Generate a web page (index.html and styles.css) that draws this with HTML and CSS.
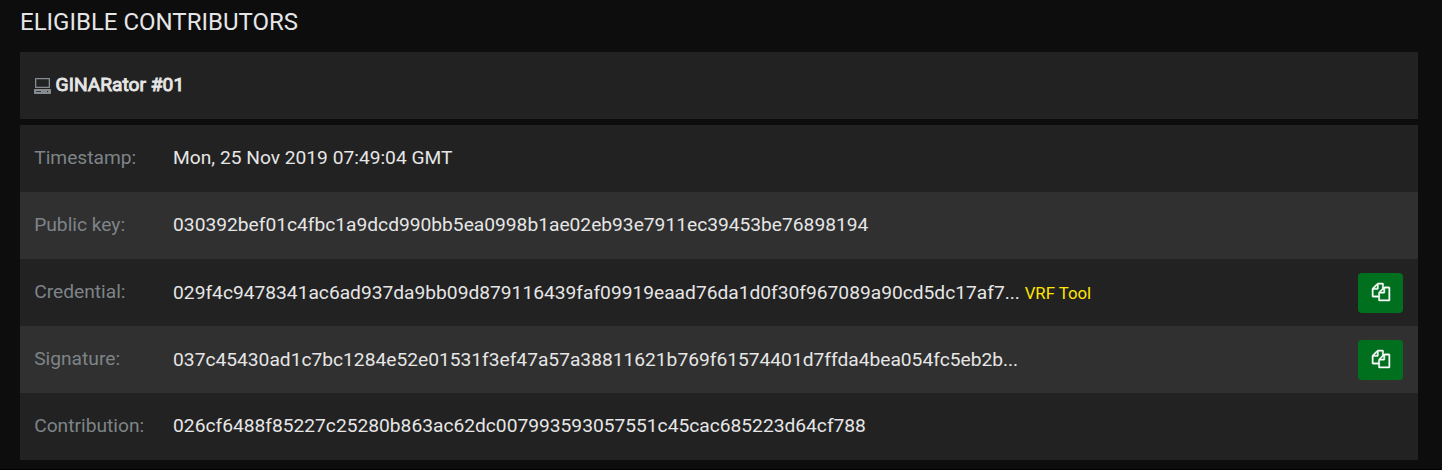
FILE: index.html
```html
<!DOCTYPE html>
<html lang="en">
<head>
<meta charset="utf-8">
<title>Eligible contributors</title>
<link rel="stylesheet" href="styles.css">
</head>
<body>
<svg class="defs" aria-hidden="true">
  <symbol id="copy" viewBox="0 0 1792 1792" overflow="visible"><path d="M1696 384q40 0 68 28t28 68v1216q0 40-28 68t-68 28h-960q-40 0-68-28t-28-68v-288h-544q-40 0-68-28t-28-68v-672q0-40 20-88t48-76l408-408q28-28 76-48t88-20h416q40 0 68 28t28 68v328q68-40 128-40h416zm-544 213l-299 299h299v-299zm-640-384l-299 299h299v-299zm196 647l316-316v-416h-384v416q0 40-28 68t-68 28h-416v640h512v-256q0-40 20-88t48-76zm956 804v-1152h-384v416q0 40-28 68t-68 28h-416v640h896z"/></symbol>
</svg>
<main class="contributors">
  <h1 class="heading">ELIGIBLE CONTRIBUTORS</h1>
  <div class="machine">
    <svg class="computer" viewBox="0 0 17 16"><path fill-rule="evenodd" d="M1.5 0h14l.5.5v9l-.5.5h-14l-.5-.5v-9zM2.3 1.3v7.4h12.4V1.3zM.5 11h16l.5.5v4l-.5.5H.5l-.5-.5v-4zM2 13v.8h5v-.8zM13 13v1h1v-1z"/></svg>
    <span class="name">GINARator #01</span>
  </div>
  <dl class="details">
    <div class="row"><dt class="label">Timestamp:</dt><dd class="value">Mon, 25 Nov 2019 07:49:04 GMT</dd></div>
    <div class="row"><dt class="label">Public key:</dt><dd class="value">030392bef01c4fbc1a9dcd990bb5ea0998b1ae02eb93e7911ec39453be76898194</dd></div>
    <div class="row"><dt class="label">Credential:</dt><dd class="value with-copy">029f4c9478341ac6ad937da9bb09d879116439faf09919eaad76da1d0f30f967089a90cd5dc17af7... <a class="tool">VRF Tool</a></dd><button class="copy" aria-label="Copy credential"><svg class="glyph"><use href="#copy"/></svg></button></div>
    <div class="row"><dt class="label">Signature:</dt><dd class="value with-copy">037c45430ad1c7bc1284e52e01531f3ef47a57a38811621b769f61574401d7ffda4bea054fc5eb2b...</dd><button class="copy" aria-label="Copy signature"><svg class="glyph"><use href="#copy"/></svg></button></div>
    <div class="row"><dt class="label">Contribution:</dt><dd class="value">026cf6488f85227c25280b863ac62dc007993593057551c45cac685223d64cf788</dd></div>
  </dl>
</main>
</body>
</html>
```
FILE: styles.css
```css
* { box-sizing: border-box; }
body {
  margin: 0;
  height: 470px;
  overflow: hidden;
  background: #0d0d0d;
  border-bottom: 1px solid #000;
  color: #e6e6e6;
  font: 19.2px/26px Roboto, sans-serif;
}
.defs { position: absolute; width: 0; height: 0; }
.contributors { padding: 7px 24px 0 20px; }
.heading { margin: 0 0 15px; font-size: 24px; line-height: 30px; font-weight: 400; }
.machine {
  display: flex;
  align-items: center;
  gap: 4.6px;
  height: 67px;
  padding: 0 14px 2px;
  margin-bottom: 6px;
  background: #222;
}
.computer { width: 17px; height: 16px; margin-top: 3px; fill: #858b8f; }
.name { font-weight: 400; -webkit-text-stroke: 0.9px #e6e6e6; }
.details { margin: 0; }
.row {
  display: flex;
  align-items: center;
  height: 67px;
  padding: 0 15px 0 14.2px;
  background: #222;
}
.row:nth-child(even) { background: #303030; }
.label { width: 138.9px; padding-bottom: 1px; color: #7e8488; }
.value { flex: 1; margin: 0; padding-bottom: 1px; white-space: nowrap; }
.with-copy { padding-bottom: 0; }
.tool { color: #ffe600; font-size: 16.8px; line-height: 1; }
.copy {
  display: flex;
  align-items: center;
  justify-content: center;
  width: 45px;
  height: 40px;
  padding: 0 0 2px 1px;
  border: 0;
  border-radius: 4px;
  background: #00701f;
}
.glyph { width: 18px; height: 18px; overflow: visible; fill: #fff; stroke: #fff; stroke-width: 45; }
```
